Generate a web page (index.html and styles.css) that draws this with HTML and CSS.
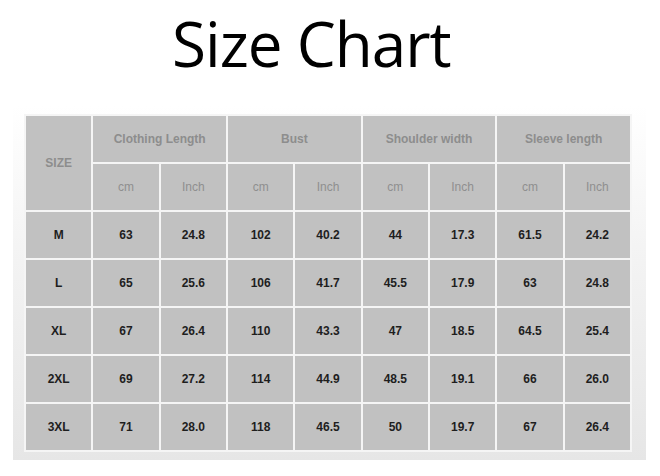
FILE: index.html
```html
<!DOCTYPE html>
<html>
<head>
<meta charset="utf-8">
<link rel="stylesheet" href="styles.css">
</head>
<body>
<h1 class="title">Size Chart</h1>
<div class="panel">
<table class="chart">
<tr class="head">
<th rowspan="2" class="size">SIZE</th>
<th colspan="2">Clothing Length</th>
<th colspan="2">Bust</th>
<th colspan="2">Shoulder width</th>
<th colspan="2">Sleeve length</th>
</tr>
<tr class="head unit">
<th>cm</th><th>Inch</th><th>cm</th><th>Inch</th><th>cm</th><th>Inch</th><th>cm</th><th>Inch</th>
</tr>
<tr><td>M</td><td>63</td><td>24.8</td><td>102</td><td>40.2</td><td>44</td><td>17.3</td><td>61.5</td><td>24.2</td></tr>
<tr><td>L</td><td>65</td><td>25.6</td><td>106</td><td>41.7</td><td>45.5</td><td>17.9</td><td>63</td><td>24.8</td></tr>
<tr><td>XL</td><td>67</td><td>26.4</td><td>110</td><td>43.3</td><td>47</td><td>18.5</td><td>64.5</td><td>25.4</td></tr>
<tr><td>2XL</td><td>69</td><td>27.2</td><td>114</td><td>44.9</td><td>48.5</td><td>19.1</td><td>66</td><td>26.0</td></tr>
<tr><td>3XL</td><td>71</td><td>28.0</td><td>118</td><td>46.5</td><td>50</td><td>19.7</td><td>67</td><td>26.4</td></tr>
</table>
</div>
</body>
</html>
```
FILE: styles.css
```css
html, body {
  margin: 0;
  padding: 0;
  background: #ffffff;
}
body {
  width: 660px;
  height: 476px;
  overflow: hidden;
}
.title {
  margin: 0;
  padding: 3px 0 0 172px;
  height: 101px;
  box-sizing: border-box;
  font-family: "Open Sans", sans-serif;
  font-weight: 400;
  font-size: 62px;
  line-height: 80px;
  color: #000;
  letter-spacing: -1px;
}
.panel {
  margin: 4px 0 0 13px;
  width: 633px;
  box-sizing: border-box;
  padding: 9px 14px 8px 11px;
  background: linear-gradient(to bottom, #ffffff 0%, #f4f4f4 40%, #e6e6e6 100%);
}
.chart {
  width: 608px;
  table-layout: fixed;
  border-collapse: collapse;
  font-family: "Liberation Sans", Arial, sans-serif;
  font-size: 12px;
}
.chart th, .chart td {
  background: #c1c1c1;
  border: 2px solid #f5f5f5;
  text-align: center;
  vertical-align: middle;
  padding: 0;
  height: 46px;
}
.chart th {
  color: #8d8d8d;
  font-weight: bold;
}
.chart .unit th {
  font-weight: normal;
  color: #8f8f8f;
}
.chart td {
  color: #1e1e1e;
  font-weight: bold;
}
```
